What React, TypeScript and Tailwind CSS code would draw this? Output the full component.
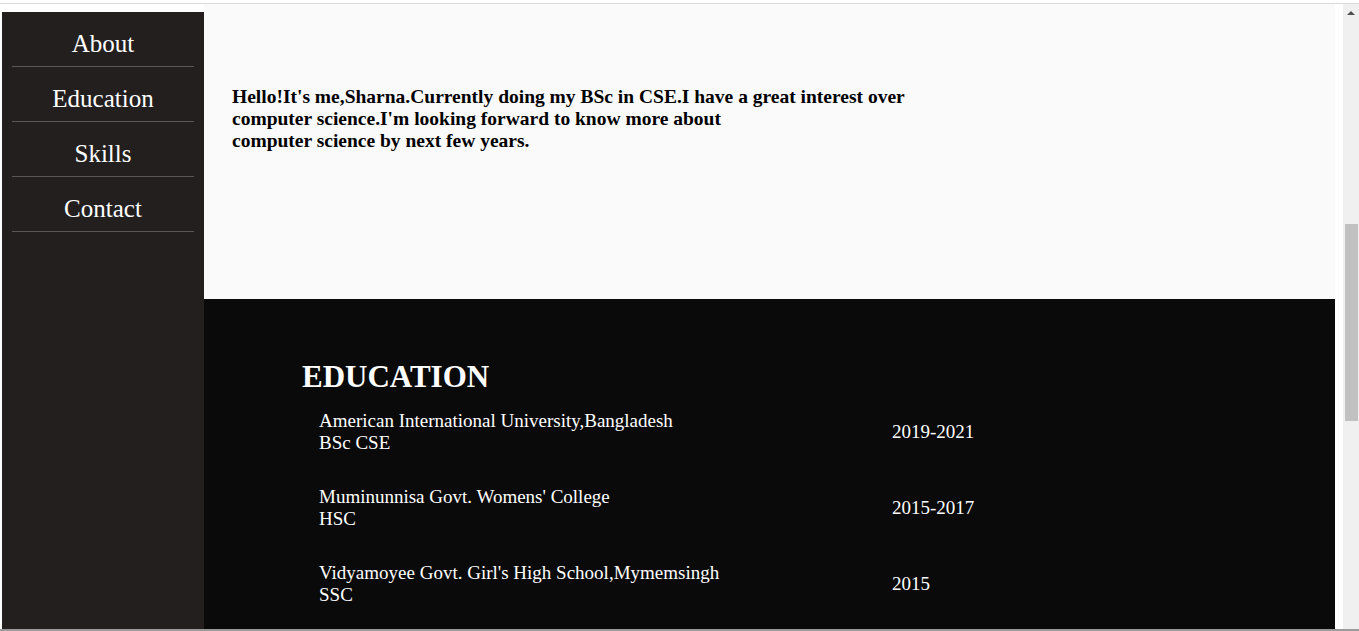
import React from 'react'

const navItems = ['About', 'Education', 'Skills', 'Contact']

const education = [
  { school: 'American International University,Bangladesh', degree: 'BSc CSE', years: '2019-2021' },
  { school: "Muminunnisa Govt. Womens' College", degree: 'HSC', years: '2015-2017' },
  { school: "Vidyamoyee Govt. Girl's High School,Mymemsingh", degree: 'SSC', years: '2015' },
]

export default function App() {
  return (
    <div className="flex h-[631px] w-[1359px] flex-col overflow-hidden bg-white font-['Liberation_Serif','Times_New_Roman',serif]">
      <div className="h-[4px] shrink-0 border-b border-[#dadada] bg-white" />

      <div className="flex min-h-0 flex-1">
        {/* sidebar */}
        <div className="flex w-[204px] shrink-0 bg-white pl-[2px] pt-[8px]">
          <nav className="flex flex-1 flex-col bg-[#231f1f] px-[10px]">
            {navItems.map((item) => (
              <a
                key={item}
                href="#"
                className="box-border block h-[55px] border-b border-[#5a5757] pt-[19px] text-center text-[25px] leading-[25px] text-white"
              >
                {item}
              </a>
            ))}
          </nav>
        </div>

        <main className="flex w-[1131px] shrink-0 flex-col">
          <section className="h-[295px] shrink-0 bg-[#fafafa] pl-[28px] pt-[82px]">
            <p className="whitespace-nowrap text-[19.5px] font-bold leading-[22px] text-black">
              Hello!It's me,Sharna.Currently doing my BSc in CSE.I have a great interest over
              <br />
              computer science.I'm looking forward to know more about
              <br />
              computer science by next few years.
            </p>
          </section>

          <section className="flex-1 bg-[#0a0a0a] pl-[98px] pt-[62px] text-white">
            <h2 className="text-[31px] font-bold leading-[31px]">EDUCATION</h2>
            <div className="mt-[18px] flex flex-col gap-[32px] pl-[17px]">
              {education.map((row) => (
                <div key={row.years} className="grid grid-cols-[573px_auto] items-center text-[19px] leading-[22px]">
                  <div className="whitespace-nowrap">
                    {row.school}
                    <br />
                    {row.degree}
                  </div>
                  <div>{row.years}</div>
                </div>
              ))}
            </div>
          </section>
        </main>

        <div className="w-[8px] shrink-0 bg-white" />

        {/* scrollbar */}
        <div className="relative w-[16px] shrink-0 bg-[#f0f0f0]">
          <svg className="absolute left-[4px] top-[6px]" width="8" height="5" viewBox="0 0 8 5">
            <polygon points="0,5 4,1 8,5" fill="#505050" />
          </svg>
          <div className="absolute left-[2px] right-[1px] top-[220px] h-[197px] bg-[#c1c1c1]" />
        </div>
      </div>

      <div className="h-[2px] shrink-0 bg-[#9b9b9b]" />
    </div>
  )
}
